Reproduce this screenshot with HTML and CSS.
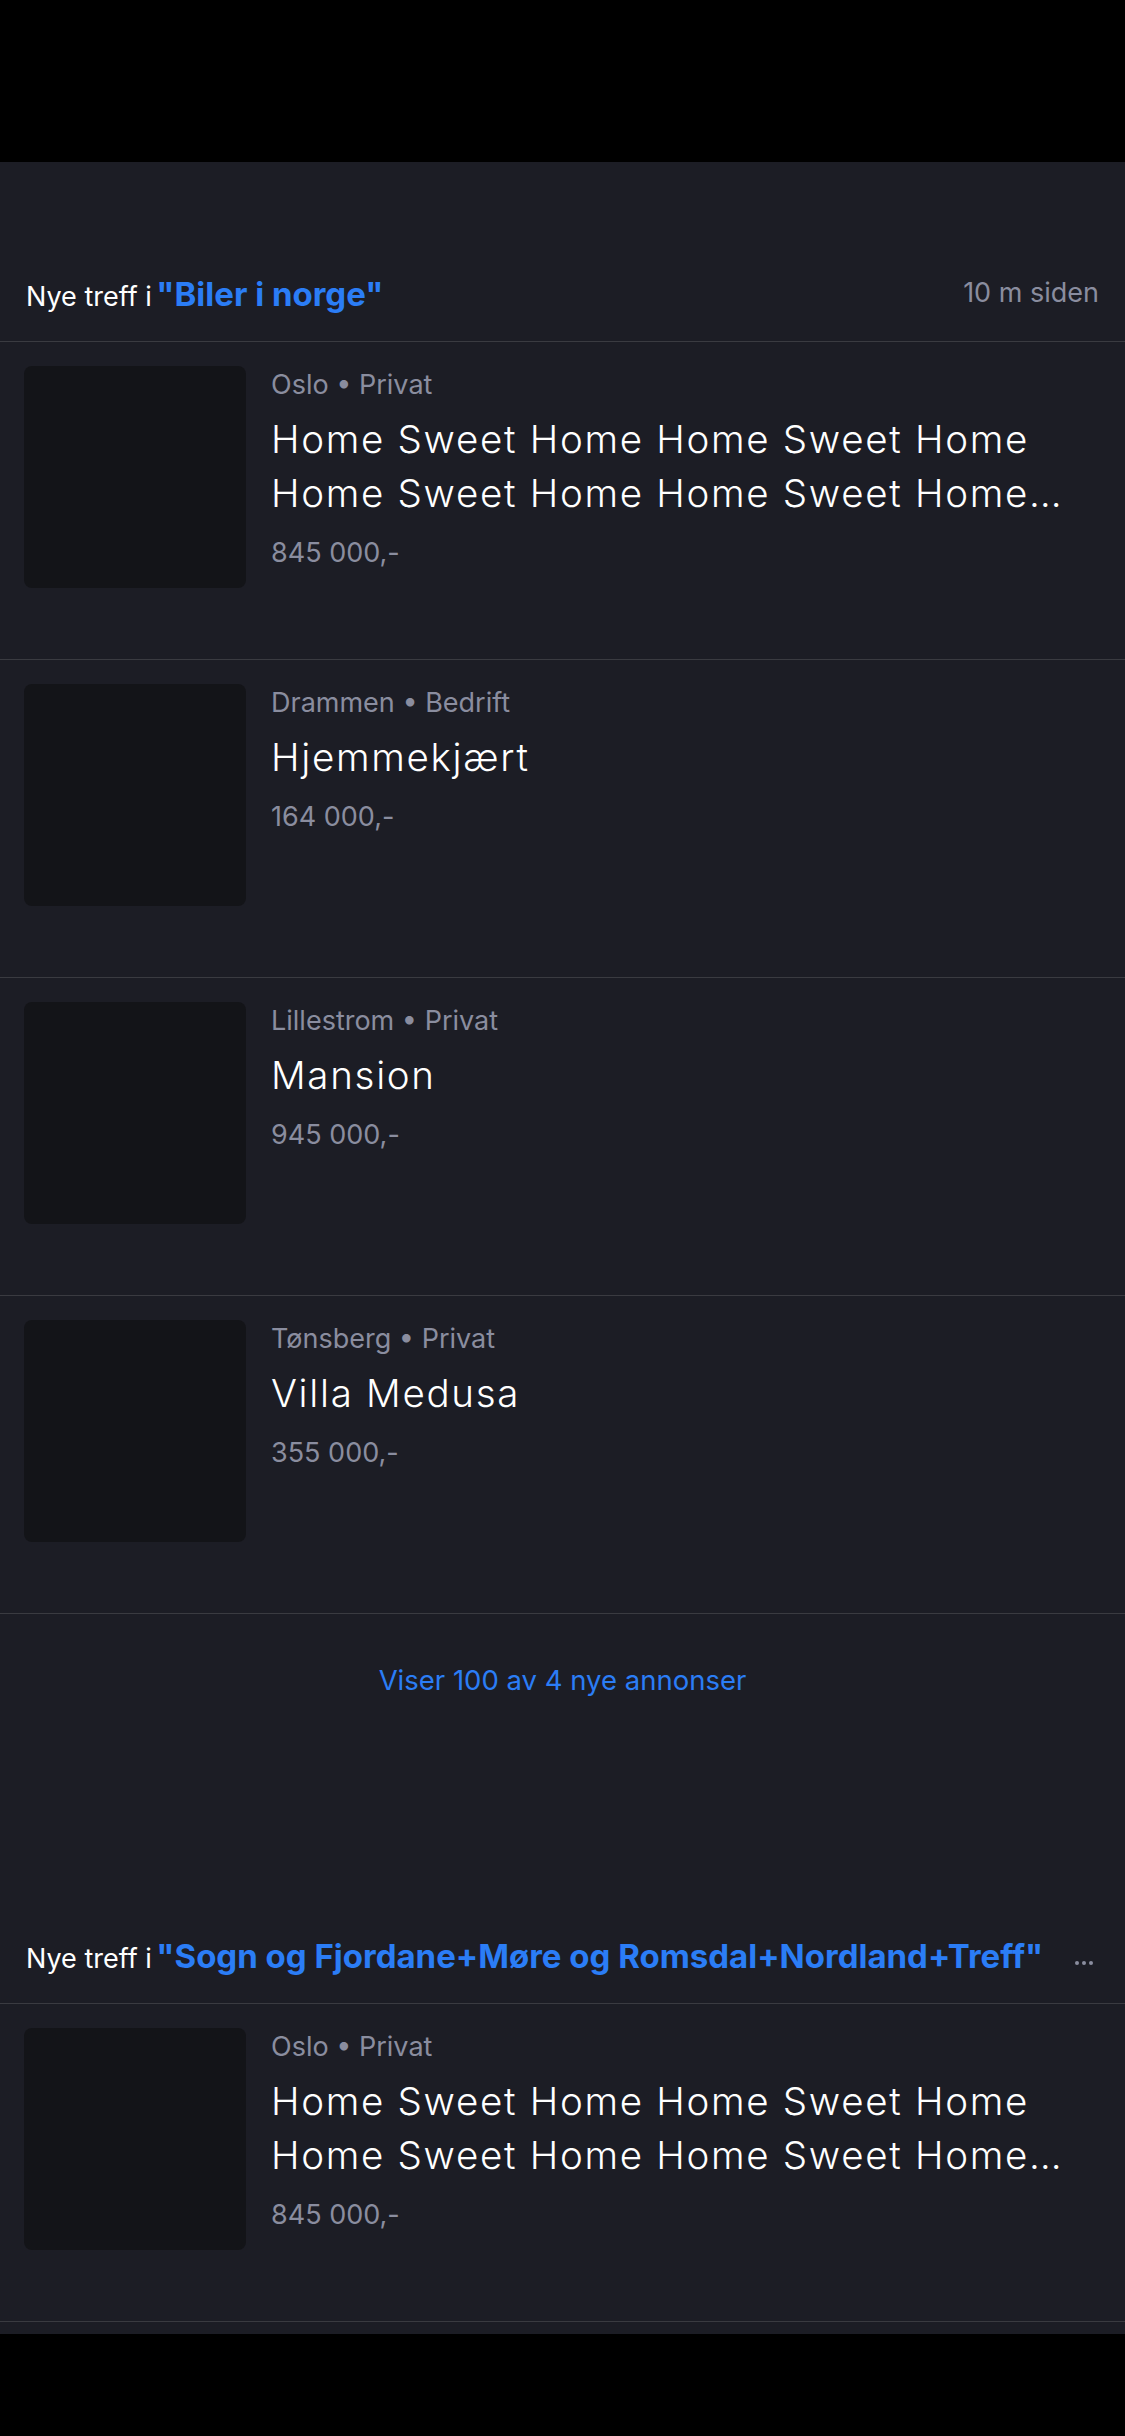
FILE: index.html
```html
<!DOCTYPE html>
<html lang="no">
<head>
<meta charset="utf-8">
<title>Nye treff</title>
<link rel="stylesheet" href="styles.css">
</head>
<body>
<div class="statusbar"></div>
<main class="screen">
  <section class="group">
    <header class="group-head">
      <p class="group-title"><span class="lead">Nye treff i</span> <span class="query">"Biler i norge"</span></p>
      <span class="time">10 m siden</span>
    </header>
    <ul class="list">
      <li class="ad">
        <div class="thumb"></div>
        <div class="ad-body">
          <p class="meta">Oslo • Privat</p>
          <h3 class="ad-title">Home Sweet Home Home Sweet Home Home Sweet Home Home Sweet Home Home Sweet Home Home Sweet Home</h3>
          <p class="price">845 000,-</p>
        </div>
      </li>
      <li class="ad">
        <div class="thumb"></div>
        <div class="ad-body">
          <p class="meta">Drammen • Bedrift</p>
          <h3 class="ad-title">Hjemmekjært</h3>
          <p class="price">164 000,-</p>
        </div>
      </li>
      <li class="ad">
        <div class="thumb"></div>
        <div class="ad-body">
          <p class="meta">Lillestrom • Privat</p>
          <h3 class="ad-title">Mansion</h3>
          <p class="price">945 000,-</p>
        </div>
      </li>
      <li class="ad">
        <div class="thumb"></div>
        <div class="ad-body">
          <p class="meta">Tønsberg • Privat</p>
          <h3 class="ad-title">Villa Medusa</h3>
          <p class="price">355 000,-</p>
        </div>
      </li>
    </ul>
    <p class="more-link">Viser 100 av 4 nye annonser</p>
  </section>
  <section class="group">
    <header class="group-head">
      <p class="group-title"><span class="lead">Nye treff i</span> <span class="query">"Sogn og Fjordane+Møre og Romsdal+Nordland+Treff"</span></p>
      <span class="dots"><i></i><i></i><i></i></span>
    </header>
    <ul class="list">
      <li class="ad">
        <div class="thumb"></div>
        <div class="ad-body">
          <p class="meta">Oslo • Privat</p>
          <h3 class="ad-title">Home Sweet Home Home Sweet Home Home Sweet Home Home Sweet Home Home Sweet Home Home Sweet Home</h3>
          <p class="price">845 000,-</p>
        </div>
      </li>
    </ul>
  </section>
  <div class="tail"></div>
</main>
<div class="homebar"></div>
</body>
</html>
```
FILE: styles.css
```css
* { box-sizing: border-box; }
html, body { margin: 0; padding: 0; background: #000; }
body {
  width: 1125px;
  height: 2436px;
  overflow: hidden;
  font-family: Inter, "Noto Sans", "Liberation Sans", sans-serif;
  color: #ffffff;
}
p, h3, ul { margin: 0; padding: 0; }
ul { list-style: none; }

.statusbar { height: 162px; background: #000; }
.homebar { height: 102px; background: #000; }

.screen { background: #1c1d25; }

.group-head {
  height: 180px;
  display: flex;
  align-items: flex-end;
  justify-content: space-between;
  gap: 24px;
  padding: 0 26px 19px 26px;
  border-bottom: 1px solid #3a3b41;
}
.group-title {
  white-space: nowrap;
  overflow: hidden;
  min-width: 0;
  line-height: 44px;
}
.lead { font-size: 27px; font-weight: 400; color: #ffffff; }
.query { font-size: 33px; font-weight: 700; color: #2b7df6; }
.time {
  font-size: 27px;
  color: #8a8d9f;
  line-height: 36px;
  margin-bottom: 11px;
  white-space: nowrap;
}
.dots {
  display: flex;
  gap: 3px;
  margin-bottom: 19px;
  margin-right: 6px;
}
.dots i {
  width: 4px;
  height: 4px;
  border-radius: 50%;
  background: #8a8d9f;
}

.ad {
  display: flex;
  gap: 25px;
  padding: 24px 24px 71px 24px;
  border-bottom: 1px solid #3a3b41;
}
.thumb {
  flex: 0 0 222px;
  height: 222px;
  border-radius: 8px;
  background: #131418;
}
.ad-body { flex: 1; min-width: 0; padding-top: 1px; }
.meta {
  font-size: 27px;
  line-height: 36px;
  color: #8a8d9f;
}
.ad-title {
  margin-top: 9px;
  font-size: 38.5px;
  line-height: 54px;
  font-weight: 300;
  letter-spacing: 1.7px;
  color: #ffffff;
  display: -webkit-box;
  -webkit-line-clamp: 2;
  -webkit-box-orient: vertical;
  overflow: hidden;
}
.price {
  margin-top: 15px;
  font-size: 27px;
  line-height: 36px;
  color: #8a8d9f;
}

.more-link {
  height: 210px;
  padding-top: 46px;
  text-align: center;
  font-size: 27.5px;
  line-height: 40px;
  color: #2b7df6;
}

.tail { height: 12px; }
```
